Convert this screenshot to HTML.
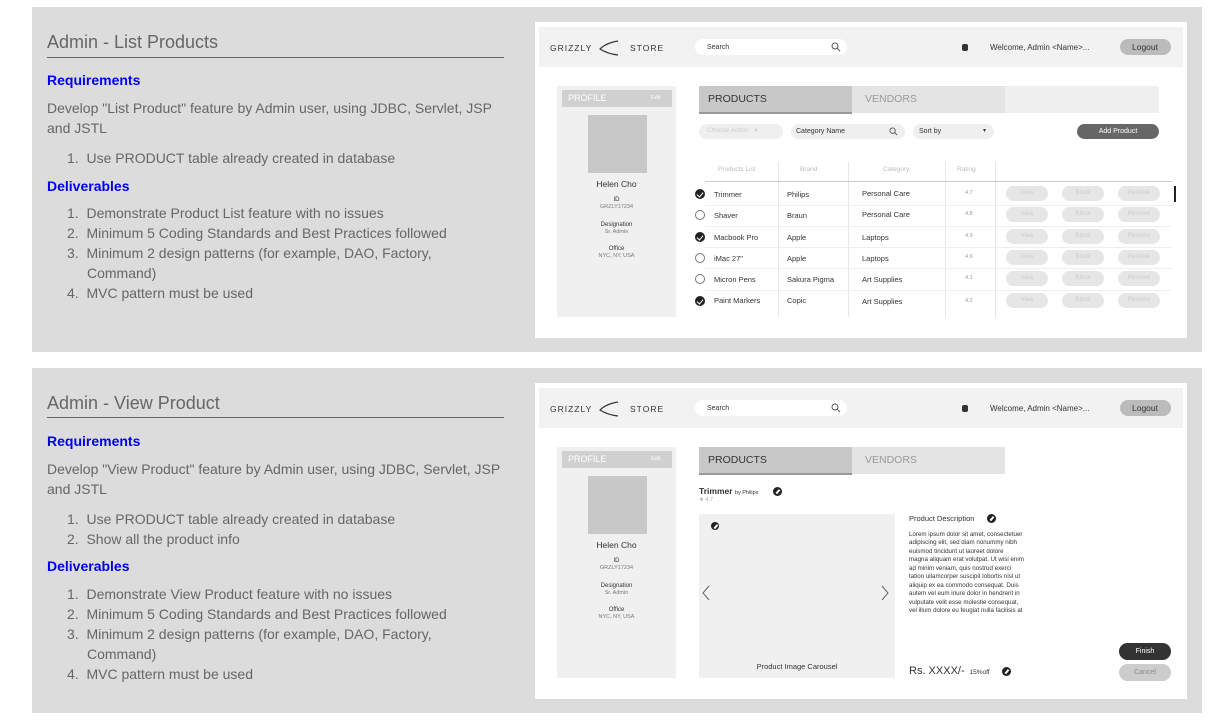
<!DOCTYPE html>
<html><head><meta charset="utf-8"><style>
*{margin:0;padding:0;box-sizing:border-box}
body{width:1224px;height:720px;background:#fff;position:relative;overflow:hidden;font-family:"Liberation Sans",sans-serif}
.a{position:absolute}
.t{position:absolute;white-space:nowrap;line-height:1}
.sec{position:absolute;left:32px;width:1170px;height:345px;background:#dcdcdc}
.h{position:absolute;left:15px;font-size:18px;color:#666;line-height:1}
.hl{position:absolute;left:15px;width:457px;height:1px;background:#666}
.bl{position:absolute;left:15px;font-size:14px;font-weight:bold;color:#0000ee;line-height:1}
.p{position:absolute;left:15px;font-size:14px;color:#666;line-height:1;white-space:nowrap}
.n{position:absolute;left:35px;font-size:14px;color:#666;line-height:1;white-space:nowrap}
.m{position:absolute;width:652px;height:316px;background:#fff}
.pill{position:absolute;border-radius:8px}
.g{color:#333}
.cb{position:absolute;width:10px;height:10px;border-radius:50%}
.cb.on{background:#222}
.cb.on::after{content:"";position:absolute;left:3px;top:2px;width:3px;height:5px;border:solid #fff;border-width:0 1px 1px 0;transform:rotate(40deg)}
.cb.off{border:1px solid #777;background:#fff}
.btn{position:absolute;width:42px;height:15px;border-radius:8px;background:#e6e6e6;color:#ccc;font-size:6px;text-align:center;line-height:15px}
.ed{position:absolute;width:9px;height:9px;border-radius:50%;background:#222}
.ed::after{content:"";position:absolute;left:4px;top:2px;width:1.5px;height:5px;background:#fff;transform:rotate(40deg)}
</style></head><body>

<div class="sec" style="top:7px">
 <div class="h" style="top:26px">Admin - List Products</div>
 <div class="hl" style="top:50px"></div>
 <div class="bl" style="top:66px">Requirements</div>
 <div class="p" style="top:94px">Develop "List Product" feature by Admin user, using JDBC, Servlet, JSP</div>
 <div class="p" style="top:114px">and JSTL</div>
 <div class="n" style="top:144px">1.&nbsp;&nbsp;Use PRODUCT table already created in database</div>
 <div class="bl" style="top:172px">Deliverables</div>
 <div class="n" style="top:199px">1.&nbsp;&nbsp;Demonstrate Product List feature with no issues</div>
 <div class="n" style="top:219px">2.&nbsp;&nbsp;Minimum 5 Coding Standards and Best Practices followed</div>
 <div class="n" style="top:239px">3.&nbsp;&nbsp;Minimum 2 design patterns (for example, DAO, Factory,</div>
 <div class="n" style="top:259px;left:55px">Command)</div>
 <div class="n" style="top:279px">4.&nbsp;&nbsp;MVC pattern must be used</div>
</div>

<div class="sec" style="top:368px">
 <div class="h" style="top:26px">Admin - View Product</div>
 <div class="hl" style="top:49px"></div>
 <div class="bl" style="top:66px">Requirements</div>
 <div class="p" style="top:94px">Develop "View Product" feature by Admin user, using JDBC, Servlet, JSP</div>
 <div class="p" style="top:114px">and JSTL</div>
 <div class="n" style="top:144px">1.&nbsp;&nbsp;Use PRODUCT table already created in database</div>
 <div class="n" style="top:164px">2.&nbsp;&nbsp;Show all the product info</div>
 <div class="bl" style="top:191px">Deliverables</div>
 <div class="n" style="top:219px">1.&nbsp;&nbsp;Demonstrate View Product feature with no issues</div>
 <div class="n" style="top:239px">2.&nbsp;&nbsp;Minimum 5 Coding Standards and Best Practices followed</div>
 <div class="n" style="top:259px">3.&nbsp;&nbsp;Minimum 2 design patterns (for example, DAO, Factory,</div>
 <div class="n" style="top:279px;left:55px">Command)</div>
 <div class="n" style="top:299px">4.&nbsp;&nbsp;MVC pattern must be used</div>
</div>

<!-- Mockup 1 -->
<div class="m" style="left:535px;top:22px">
 <div class="a" style="left:4px;top:5px;width:644px;height:40px;background:#f2f2f2"></div>
 <div class="t g" style="left:15px;top:22px;font-size:8.5px;letter-spacing:1px">GRIZZLY</div>
 <svg class="a" style="left:63px;top:17px" width="24" height="18" viewBox="0 0 24 18"><path d="M20 2 Q8 4 2 10 Q10 15 20 16" fill="none" stroke="#333" stroke-width="1.2"/></svg>
 <div class="t g" style="left:95px;top:22px;font-size:8.5px;letter-spacing:1px">STORE</div>
 <div class="pill" style="left:160px;top:17px;width:152px;height:16px;background:#fff"></div>
 <div class="t g" style="left:172px;top:22px;font-size:7px">Search</div>
 <svg class="a" style="left:296px;top:20px" width="10" height="10" viewBox="0 0 10 10"><circle cx="4" cy="4" r="3" fill="none" stroke="#555"/><path d="M6.2 6.2 9 9" stroke="#555"/></svg>
 <div class="a" style="left:427px;top:22px;width:6px;height:7px;background:#333;border-radius:2px"></div>
 <div class="t g" style="left:455px;top:22px;font-size:8px">Welcome, Admin &lt;Name&gt;...</div>
 <div class="pill" style="left:585px;top:17px;width:51px;height:16px;background:#bbb"></div>
 <div class="t g" style="left:597px;top:21px;font-size:8.5px">Logout</div>

 <div class="a" style="left:22px;top:64px;width:119px;height:231px;background:#f0f0f0"></div>
 <div class="a" style="left:27px;top:68px;width:110px;height:17px;background:#d0d0d0"></div>
 <div class="t" style="left:33px;top:72px;font-size:9px;color:#fff">PROFILE</div>
 <div class="t" style="left:116px;top:74px;font-size:5.5px;color:#fff">Edit</div>
 <div class="a" style="left:53px;top:93px;width:59px;height:58px;background:#c8c8c8"></div>
 <div class="t g" style="left:22px;width:119px;text-align:center;top:158px;font-size:8.5px">Helen Cho</div>
 <div class="t g" style="left:22px;width:119px;text-align:center;top:175px;font-size:6px">ID</div>
 <div class="t" style="left:22px;width:119px;text-align:center;top:183px;font-size:5.5px;color:#777">GRZLY17234</div>
 <div class="t g" style="left:22px;width:119px;text-align:center;top:200px;font-size:6px">Designation</div>
 <div class="t" style="left:22px;width:119px;text-align:center;top:208px;font-size:5.5px;color:#777">Sr. Admin</div>
 <div class="t g" style="left:22px;width:119px;text-align:center;top:224px;font-size:6px">Office</div>
 <div class="t" style="left:22px;width:119px;text-align:center;top:232px;font-size:5.5px;color:#777">NYC, NY, USA</div>

 <div class="a" style="left:164px;top:64px;width:153px;height:28px;background:#c8c8c8;border-bottom:2px solid #999"></div>
 <div class="a" style="left:317px;top:64px;width:153px;height:27px;background:#e4e4e4"></div>
 <div class="a" style="left:470px;top:64px;width:154px;height:27px;background:#efefef"></div>
 <div class="t g" style="left:173px;top:72px;font-size:10.5px">PRODUCTS</div>
 <div class="t" style="left:330px;top:72px;font-size:10.5px;color:#999">VENDORS</div>

 <div class="pill" style="left:164px;top:102px;width:84px;height:15px;background:#efefef"></div>
 <div class="t" style="left:172px;top:106px;font-size:6.5px;color:#ccc">Choose Action &nbsp;&nbsp;▾</div>
 <div class="pill" style="left:256px;top:102px;width:114px;height:15px;background:#efefef"></div>
 <div class="t g" style="left:261px;top:106px;font-size:7px">Category Name</div>
 <svg class="a" style="left:354px;top:105px" width="9" height="9" viewBox="0 0 10 10"><circle cx="4" cy="4" r="3" fill="none" stroke="#555"/><path d="M6.2 6.2 9 9" stroke="#555"/></svg>
 <div class="pill" style="left:378px;top:102px;width:81px;height:15px;background:#efefef"></div>
 <div class="t g" style="left:384px;top:106px;font-size:7px">Sort by</div>
 <div class="t g" style="left:448px;top:106px;font-size:6px">▾</div>
 <div class="pill" style="left:542px;top:102px;width:82px;height:15px;background:#666"></div>
 <div class="t" style="left:542px;width:82px;text-align:center;top:106px;font-size:7px;color:#fff">Add Product</div>

 <div class="t" style="left:183px;top:145px;font-size:6.5px;color:#bbb">Products List</div>
 <div class="t" style="left:265px;top:145px;font-size:6.5px;color:#bbb">Brand</div>
 <div class="t" style="left:348px;top:145px;font-size:6.5px;color:#bbb">Category</div>
 <div class="t" style="left:422px;top:145px;font-size:6.5px;color:#bbb">Rating</div>
 <div class="a" style="left:243px;top:140px;width:1px;height:155px;background:#e6e6e6"></div>
 <div class="a" style="left:313px;top:140px;width:1px;height:155px;background:#e6e6e6"></div>
 <div class="a" style="left:410px;top:140px;width:1px;height:155px;background:#e6e6e6"></div>
 <div class="a" style="left:460px;top:140px;width:1px;height:155px;background:#e6e6e6"></div>
 <div class="a" style="left:170px;top:159px;width:467px;height:1px;background:#ccc"></div>
 <div class="a" style="left:170px;top:183px;width:467px;height:1px;background:#eee"></div>
 <div class="a" style="left:170px;top:204px;width:467px;height:1px;background:#eee"></div>
 <div class="a" style="left:170px;top:225px;width:467px;height:1px;background:#eee"></div>
 <div class="a" style="left:170px;top:246px;width:467px;height:1px;background:#eee"></div>
 <div class="a" style="left:170px;top:268px;width:467px;height:1px;background:#eee"></div>
 <div class="a" style="left:639px;top:164px;width:2px;height:16px;background:#222"></div>

 <div class="cb on" style="left:160px;top:167px"></div>
 <div class="t g" style="left:179px;top:169px;font-size:7.5px">Trimmer</div><div class="t g" style="left:252px;top:169px;font-size:7.5px">Philips</div><div class="t g" style="left:327px;top:168px;font-size:7.5px">Personal Care</div><div class="t" style="left:430px;top:169px;font-size:5.5px;color:#999">4.7</div>
 <div class="btn" style="left:471px;top:164px">View</div><div class="btn" style="left:527px;top:164px">Block</div><div class="btn" style="left:583px;top:164px">Remove</div>

 <div class="cb off" style="left:160px;top:188px"></div>
 <div class="t g" style="left:179px;top:190px;font-size:7.5px">Shaver</div><div class="t g" style="left:252px;top:190px;font-size:7.5px">Braun</div><div class="t g" style="left:327px;top:189px;font-size:7.5px">Personal Care</div><div class="t" style="left:430px;top:190px;font-size:5.5px;color:#999">4.8</div>
 <div class="btn" style="left:471px;top:185px">View</div><div class="btn" style="left:527px;top:185px">Block</div><div class="btn" style="left:583px;top:185px">Remove</div>

 <div class="cb on" style="left:160px;top:210px"></div>
 <div class="t g" style="left:179px;top:212px;font-size:7.5px">Macbook Pro</div><div class="t g" style="left:252px;top:212px;font-size:7.5px">Apple</div><div class="t g" style="left:327px;top:212px;font-size:7.5px">Laptops</div><div class="t" style="left:430px;top:212px;font-size:5.5px;color:#999">4.9</div>
 <div class="btn" style="left:471px;top:207px">View</div><div class="btn" style="left:527px;top:207px">Block</div><div class="btn" style="left:583px;top:207px">Remove</div>

 <div class="cb off" style="left:160px;top:231px"></div>
 <div class="t g" style="left:179px;top:233px;font-size:7.5px">iMac 27"</div><div class="t g" style="left:252px;top:233px;font-size:7.5px">Apple</div><div class="t g" style="left:327px;top:233px;font-size:7.5px">Laptops</div><div class="t" style="left:430px;top:233px;font-size:5.5px;color:#999">4.6</div>
 <div class="btn" style="left:471px;top:228px">View</div><div class="btn" style="left:527px;top:228px">Block</div><div class="btn" style="left:583px;top:228px">Remove</div>

 <div class="cb off" style="left:160px;top:252px"></div>
 <div class="t g" style="left:179px;top:254px;font-size:7.5px">Micron Pens</div><div class="t g" style="left:252px;top:254px;font-size:7.5px">Sakura Pigma</div><div class="t g" style="left:327px;top:254px;font-size:7.5px">Art Supplies</div><div class="t" style="left:430px;top:254px;font-size:5.5px;color:#999">4.1</div>
 <div class="btn" style="left:471px;top:249px">View</div><div class="btn" style="left:527px;top:249px">Block</div><div class="btn" style="left:583px;top:249px">Remove</div>

 <div class="cb on" style="left:160px;top:274px"></div>
 <div class="t g" style="left:179px;top:275px;font-size:7.5px">Paint Markers</div><div class="t g" style="left:252px;top:275px;font-size:7.5px">Copic</div><div class="t g" style="left:327px;top:276px;font-size:7.5px">Art Supplies</div><div class="t" style="left:430px;top:277px;font-size:5.5px;color:#999">4.2</div>
 <div class="btn" style="left:471px;top:271px">View</div><div class="btn" style="left:527px;top:271px">Block</div><div class="btn" style="left:583px;top:271px">Remove</div>
</div>

<!-- Mockup 2 -->
<div class="m" style="left:535px;top:383px">
 <div class="a" style="left:4px;top:5px;width:644px;height:40px;background:#f2f2f2"></div>
 <div class="t g" style="left:15px;top:22px;font-size:8.5px;letter-spacing:1px">GRIZZLY</div>
 <svg class="a" style="left:63px;top:17px" width="24" height="18" viewBox="0 0 24 18"><path d="M20 2 Q8 4 2 10 Q10 15 20 16" fill="none" stroke="#333" stroke-width="1.2"/></svg>
 <div class="t g" style="left:95px;top:22px;font-size:8.5px;letter-spacing:1px">STORE</div>
 <div class="pill" style="left:160px;top:17px;width:152px;height:16px;background:#fff"></div>
 <div class="t g" style="left:172px;top:22px;font-size:7px">Search</div>
 <svg class="a" style="left:296px;top:20px" width="10" height="10" viewBox="0 0 10 10"><circle cx="4" cy="4" r="3" fill="none" stroke="#555"/><path d="M6.2 6.2 9 9" stroke="#555"/></svg>
 <div class="a" style="left:427px;top:22px;width:6px;height:7px;background:#333;border-radius:2px"></div>
 <div class="t g" style="left:455px;top:22px;font-size:8px">Welcome, Admin &lt;Name&gt;...</div>
 <div class="pill" style="left:585px;top:17px;width:51px;height:16px;background:#bbb"></div>
 <div class="t g" style="left:597px;top:21px;font-size:8.5px">Logout</div>

 <div class="a" style="left:22px;top:64px;width:119px;height:231px;background:#f0f0f0"></div>
 <div class="a" style="left:27px;top:68px;width:110px;height:17px;background:#d0d0d0"></div>
 <div class="t" style="left:33px;top:72px;font-size:9px;color:#fff">PROFILE</div>
 <div class="t" style="left:116px;top:74px;font-size:5.5px;color:#fff">Edit</div>
 <div class="a" style="left:53px;top:93px;width:59px;height:58px;background:#c8c8c8"></div>
 <div class="t g" style="left:22px;width:119px;text-align:center;top:158px;font-size:8.5px">Helen Cho</div>
 <div class="t g" style="left:22px;width:119px;text-align:center;top:175px;font-size:6px">ID</div>
 <div class="t" style="left:22px;width:119px;text-align:center;top:183px;font-size:5.5px;color:#777">GRZLY17234</div>
 <div class="t g" style="left:22px;width:119px;text-align:center;top:200px;font-size:6px">Designation</div>
 <div class="t" style="left:22px;width:119px;text-align:center;top:208px;font-size:5.5px;color:#777">Sr. Admin</div>
 <div class="t g" style="left:22px;width:119px;text-align:center;top:224px;font-size:6px">Office</div>
 <div class="t" style="left:22px;width:119px;text-align:center;top:232px;font-size:5.5px;color:#777">NYC, NY, USA</div>

 <div class="a" style="left:164px;top:64px;width:153px;height:28px;background:#c8c8c8;border-bottom:2px solid #999"></div>
 <div class="a" style="left:317px;top:64px;width:153px;height:27px;background:#e4e4e4"></div>
 <div class="t g" style="left:173px;top:72px;font-size:10.5px">PRODUCTS</div>
 <div class="t" style="left:330px;top:72px;font-size:10.5px;color:#999">VENDORS</div>

 <div class="t g" style="left:164px;top:104px;font-size:8.5px;font-weight:bold">Trimmer <span style="font-size:5.5px;font-weight:normal">by Philips</span></div>
 <div class="ed" style="left:238px;top:104px"></div>
 <div class="t" style="left:164px;top:115px;font-size:5.5px;color:#aaa">★ 4.7</div>

 <div class="a" style="left:164px;top:131px;width:196px;height:164px;background:#f0f0f0"></div>
 <div class="ed" style="left:176px;top:139px;width:8px;height:8px"></div>
 <svg class="a" style="left:166px;top:202px" width="10" height="16" viewBox="0 0 10 16"><path d="M8 1 2 8 8 15" fill="none" stroke="#666"/></svg>
 <svg class="a" style="left:345px;top:202px" width="10" height="16" viewBox="0 0 10 16"><path d="M2 1 8 8 2 15" fill="none" stroke="#666"/></svg>
 <div class="t g" style="left:164px;width:196px;text-align:center;top:280px;font-size:7.5px">Product Image Carousel</div>

 <div class="t g" style="left:374px;top:132px;font-size:7.5px">Product Description</div>
 <div class="ed" style="left:452px;top:131px"></div>
 <div class="a g" style="left:374px;top:148px;font-size:6.2px;line-height:8.45px;white-space:nowrap">Lorem ipsum dolor sit amet, consectetuer<br>adipiscing elit, sed diam nonummy nibh<br>euismod tincidunt ut laoreet dolore<br>magna aliquam erat volutpat. Ut wisi enim<br>ad minim veniam, quis nostrud exerci<br>tation ullamcorper suscipit lobortis nisl ut<br>aliquip ex ea commodo consequat. Duis<br>autem vel eum iriure dolor in hendrerit in<br>vulputate velit esse molestie consequat,<br>vel illum dolore eu feugiat nulla facilisis at</div>

 <div class="t g" style="left:374px;top:283px;font-size:11px">Rs. XXXX/- <span style="font-size:6.5px">&nbsp;15%off</span></div>
 <div class="ed" style="left:467px;top:284px"></div>
 <div class="pill" style="left:584px;top:260px;width:52px;height:17px;background:#333;border-radius:9px"></div>
 <div class="t" style="left:584px;width:52px;text-align:center;top:265px;font-size:7px;color:#fff">Finish</div>
 <div class="pill" style="left:584px;top:281px;width:52px;height:17px;background:#ccc;border-radius:9px"></div>
 <div class="t" style="left:584px;width:52px;text-align:center;top:286px;font-size:7px;color:#888">Cancel</div>
</div>
</body></html>
